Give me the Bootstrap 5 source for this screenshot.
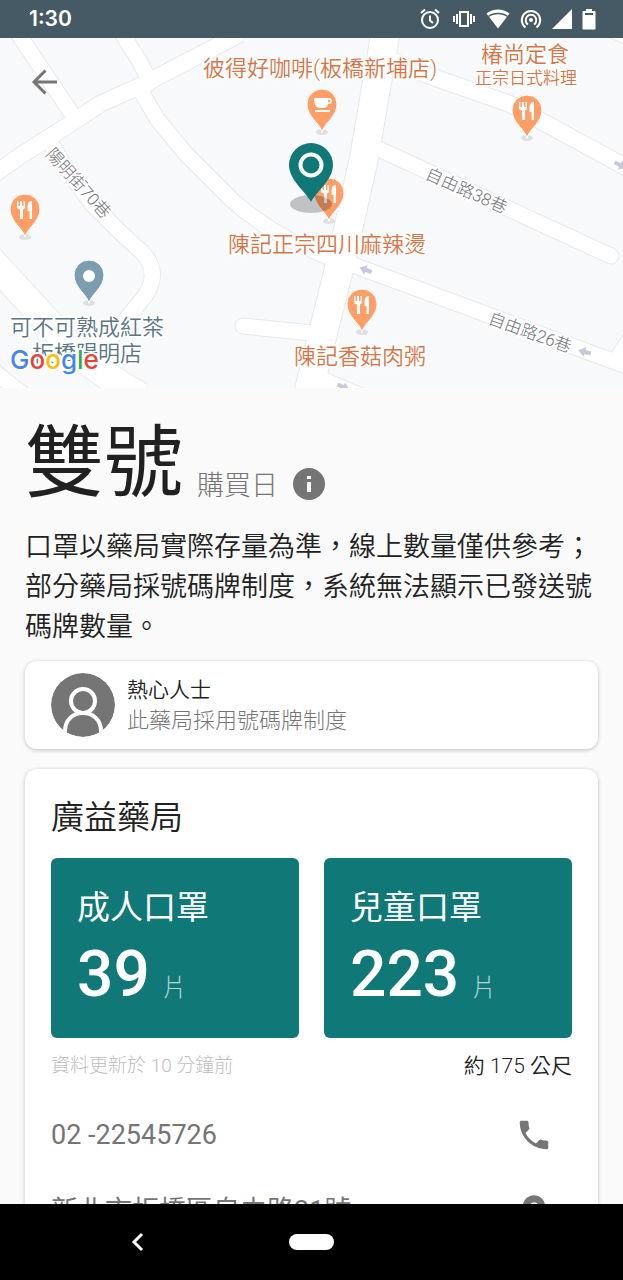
<!DOCTYPE html>
<html lang="zh-Hant">
<head>
<meta charset="utf-8">
<meta name="viewport" content="width=device-width, initial-scale=1">
<title>廣益藥局</title>
<link href="https://cdn.jsdelivr.net/npm/bootstrap@5.3.0/dist/css/bootstrap.min.css" rel="stylesheet">
<style>
  :root { --ink: #212121; --muted: #757575; --teal: #117878; }
  body { font-family: Roboto, "Noto Sans CJK TC", sans-serif; background: #fafafa; color: var(--ink); font-weight: 350; }
  .status-bar { height: 38px; background: #455a64; padding: 0 27px 0 29px; }
  .clock { font: 600 21px/38px Inter, sans-serif; }
  .status-icons { gap: 10px; }
  .screen { min-height: 0; overflow-y: auto; scrollbar-width: none; }
  .screen::-webkit-scrollbar { display: none; }
  .map-area { height: 350px; background: #f8f9fb; }
  .back-btn { top: 24px; left: 24px; line-height: 0; }
  .day-title { font-size: 79px; line-height: 80px; font-weight: 400; }
  .day-row { padding-top: 36px; gap: 14px; }
  .day-label { font-size: 27px; line-height: 36px; color: var(--muted); font-weight: 300; }
  .info-btn { line-height: 0; margin-bottom: 3px; }
  .content { padding: 0 25px; }
  .notice { font-size: 27px; line-height: 40px; margin: 23px 0 14px; }
  .panel { border: 0; border-radius: 12px; background: #fff; box-shadow: 0 1px 4px rgba(0,0,0,.24); }
  .tip { padding: 12px 26px; gap: 12px; margin-bottom: 20px; }
  .tip-name { font-size: 21px; line-height: 32px; }
  .tip-text { font-size: 22px; line-height: 30px; color: var(--muted); font-weight: 300; }
  .store { padding: 24px 26px; }
  .store-name { font-size: 33px; line-height: 50px; font-weight: 350; margin-bottom: 15px; }
  .tiles { gap: 25px; }
  .tile { height: 180px; background: var(--teal); border-radius: 6px; padding: 25px 26px; }
  .tile h3 { font-size: 33px; line-height: 50px; font-weight: 400; }
  .amount { font-size: 64px; line-height: 84px; font-weight: 500; }
  .unit { font-size: 24px; color: rgba(255,255,255,.7); font-weight: 300; margin-left: 13px; }
  .meta-row { line-height: 32px; padding: 12px 0 15px; }
  .updated { font-size: 19px; color: #bdbdbd; font-weight: 300; }
  .distance { font-size: 21px; }
  .distance span { font-weight: 300; }
  .contact { height: 76px; font-size: 27px; font-weight: 400; color: var(--muted); padding-right: 19px; }
  .nav-bar { height: 76px; }
  .nav-bar button { line-height: 0; }
  .home-pill { width: 45px; height: 16px; border-radius: 8px; background: #fff; display: block; }
  .map-area text { paint-order: stroke; stroke: #fff; stroke-width: 4px; stroke-linejoin: round; }
</style>
</head>
<body>
<div class="d-flex flex-column vh-100 overflow-hidden">

  <header class="status-bar d-flex flex-shrink-0 align-items-center justify-content-between text-white">
    <span class="clock">1:30</span>
    <div class="status-icons d-flex align-items-center">
      <svg width="24" height="24" viewBox="0 0 24 24" fill="none" stroke="#fff" stroke-width="2"><circle cx="12" cy="13" r="8"/><path d="M12 8.500v5l3 2.500M3 6l4-3.500M21 6l-4-3.500"/></svg>
      <svg width="24" height="24" viewBox="0 0 24 24" fill="none" stroke="#fff" stroke-width="2"><rect x="8" y="5" width="8" height="14"/><path d="M5 7v10M19 7v10M2 9v6M22 9v6"/></svg>
      <svg width="24" height="24" viewBox="0 0 24 24"><path fill="#fff" d="M12 21.500L.5 6.500C4 3.700 8 2.500 12 2.500s8 1.200 11.500 4z"/><path fill="none" stroke="#455a64" stroke-width="1.500" d="M2.500 9.500C5 7.500 8.500 6.500 12 6.500s7 1 9.500 3"/></svg>
      <svg class="ms-n1" width="22" height="24" viewBox="0 0 22 24" fill="none" stroke="#fff" stroke-width="2"><circle cx="11" cy="13" r="2" fill="#fff" stroke="none"/><path d="M8 17.500a5.300 5.300 0 1 1 6 0M5.500 20.500a9.200 9.200 0 1 1 11 0"/></svg>
      <svg width="20" height="24" viewBox="0 0 20 24"><path fill="#fff" d="M0 22L20 2v20z"/></svg>
      <svg width="14" height="24" viewBox="0 0 14 24"><path fill="#fff" d="M4 2h6v2h2.500c.6 0 1 .4 1 1v16.500c0 .6-.4 1-1 1h-11c-.6 0-1-.4-1-1V5c0-.6.4-1 1-1H4z"/><path fill="#455a64" d="M3 6h8v2H3z"/></svg>
    </div>
  </header>

  <main class="screen flex-grow-1">
    <section class="map-area position-relative" id="map" aria-label="地圖">
      <svg class="d-block" width="100%" height="100%" viewBox="0 38 623 350" preserveAspectRatio="xMidYMid slice">
        <defs>
          <g id="roads" fill="none">
            <path class="w15" d="M17 32L72 114"/>
            <path class="w16" d="M-10 177L20 156L70 124L100 104L140 86L240 34"/>
            <path class="w15" d="M121 32L140 62L150 82L140 90L158 120L185 153L232 200Q262 227 300 245L340 262"/>
            <path class="w15" d="M46 136L66 168L92 204L120 232L142 252Q161 272 145 296L105 345"/>
            <path class="w27" d="M-10 259L60 335Q85 365 140 396"/>
            <path class="w15" d="M-10 368L25 396"/>
            <path class="w28" d="M386 30L364 158L340 265L313 373L308 395"/>
            <path class="w16" d="M385 58L430 76L510 104L640 175"/>
            <path class="w15" d="M600 24L640 43"/>
            <path class="w15 cap" d="M370 145L611 256"/>
            <path class="w15" d="M345 262L645 373"/>
            <path class="w16" d="M640 324L614 364"/>
            <path class="w15 cap" d="M243 326L312 333"/>
            <path class="w16" d="M315 377L365 398"/>
          </g>
        </defs>
        <style>
          .w15 { stroke-width: calc(15px + var(--e)); } .w16 { stroke-width: calc(16px + var(--e)); }
          .w27 { stroke-width: calc(27px + var(--e)); } .w28 { stroke-width: calc(28px + var(--e)); }
          .cap { stroke-linecap: round; }
          .road-edge { --e: 2px; stroke: #e6e8eb; } .road-fill { --e: 0px; stroke: #fff; }
          .poi { fill: #d67548; font-size: 22px; font-weight: 350; text-anchor: middle; }
          .poi-sub { font-size: 17px; }
          .poi-shop { fill: #5b7583; }
          .street { fill: #6f7276; font-size: 17px; font-weight: 300; text-anchor: middle; }
        </style>
        <use href="#roads" class="road-edge"/>
        <use href="#roads" class="road-fill"/>

        <defs>
          <path id="arrow" fill="#c5c9de" d="M-7 0L0-5V-2H6V2H0V5z"/>
          <g id="pin">
            <ellipse cx="0" cy="43" rx="6" ry="3" fill="#000" opacity=".1"/>
            <path d="M0 43.500C-1 35-15 28-15 15A15 15 0 0 1 15 15C15 28 1 35 0 43.500z" stroke="#fff" stroke-width="1"/>
          </g>
          <g id="food" fill="#fff"><path d="M-9 7h1.500v5h1.500V7h2v5h1.500V7H-1v6q0 2-2 2.500V25H-6v-9.500q-3-.5-3-2.500z"/><path d="M6 7V25H3.500V17H1.500V12Q2 7 6 7z"/></g>
        </defs>
        <use href="#arrow" transform="translate(366 270) rotate(20)"/>
        <use href="#arrow" transform="translate(585 352) rotate(15)"/>
        <use href="#arrow" transform="translate(620 165) rotate(205)"/>
        <use href="#arrow" transform="translate(343 387) rotate(205)"/>

        <use href="#pin" x="322" y="89" fill="#ff9e67"/>
        <path fill="#fff" fill-rule="evenodd" d="M314 98h14.500q3.500 0 3.500 3t-4 3q-1 4-4 4h-5q-5-1-5-10zM328 99.500v3q2 0 2-1.500t-2-1.500zM315 110h15v2h-15z"/>
        <use href="#pin" x="527" y="95" fill="#ff9e67"/><use href="#food" x="528" y="95"/>
        <use href="#pin" x="25" y="194" fill="#ff9e67"/><use href="#food" x="26" y="194"/>
        <use href="#pin" x="362" y="289" fill="#ff9e67"/><use href="#food" x="363" y="289"/>
        <use href="#pin" x="329" y="178" fill="#ff9e67"/><use href="#food" x="330" y="178"/>
        <use href="#pin" x="89" y="260" fill="#7b9dad"/><circle cx="89" cy="276" r="6" fill="#fff"/>

        <ellipse cx="311" cy="204" rx="21" ry="9" fill="#000" opacity=".22"/>
        <path fill="#117878" d="M311 202C306 192 289 180 289 165A22 22 0 0 1 333 165C333 180 316 192 311 202z"/>
        <circle cx="311" cy="165" r="10.500" fill="none" stroke="#fff" stroke-width="4"/>

        <text class="poi" x="320" y="76">彼得好咖啡(板橋新埔店)</text>
        <text class="poi" x="525" y="62">椿尚定食</text>
        <text class="poi poi-sub" x="526" y="84">正宗日式料理</text>
        <text class="poi" x="327" y="252">陳記正宗四川麻辣燙</text>
        <text class="poi" x="360" y="364">陳記香菇肉粥</text>
        <text class="poi poi-shop" x="87" y="335">可不可熟成紅茶</text>
        <text class="poi poi-shop" x="87" y="361">板橋陽明店</text>
        <text class="street" transform="translate(74 187) rotate(48)">陽明街70巷</text>
        <text class="street" transform="translate(464 196) rotate(24)">自由路38巷</text>
        <text class="street" transform="translate(528 338) rotate(20)">自由路26巷</text>
        <text x="10" y="369" font-family="Inter, sans-serif" font-size="26" font-weight="500"><tspan fill="#4285f4">G</tspan><tspan fill="#ea4335">o</tspan><tspan fill="#fbbc05">o</tspan><tspan fill="#4285f4">g</tspan><tspan fill="#34a853">l</tspan><tspan fill="#ea4335">e</tspan></text>
      </svg>
      <button class="back-btn btn p-0 border-0 position-absolute" type="button" aria-label="返回">
        <svg width="40" height="40" viewBox="0 0 40 40" fill="none" stroke="#757575" stroke-width="3"><path d="M33 20H10M21.500 8.500L10 20l11.500 11.500"/></svg>
      </button>
    </section>

    <div class="content">
      <div class="day-row d-flex align-items-end">
        <h1 class="day-title m-0">雙號</h1>
        <span class="day-label">購買日</span>
        <button class="info-btn btn p-0 border-0" type="button" aria-label="說明">
          <svg width="34" height="34" viewBox="0 0 34 34"><circle cx="17" cy="17" r="16" fill="#757575"/><path fill="#fafafa" d="M15 9h4v3h-4zM15 15h4v10h-4z"/></svg>
        </button>
      </div>

      <p class="notice">口罩以藥局實際存量為準，線上數量僅供參考；部分藥局採號碼牌制度，系統無法顯示已發送號碼牌數量。</p>

      <div class="panel tip d-flex align-items-center">
        <svg class="flex-shrink-0" width="64" height="64" viewBox="0 0 64 64"><defs><clipPath id="face"><circle cx="32" cy="32" r="32"/></clipPath></defs><g clip-path="url(#face)"><circle cx="32" cy="32" r="32" fill="#757575"/><g fill="none" stroke="#fff" stroke-width="4"><circle cx="32" cy="28" r="12"/><path d="M14 66V58C14 47 22 40 32 40s18 7 18 18v8"/></g></g></svg>
        <div>
          <div class="tip-name">熱心人士</div>
          <div class="tip-text">此藥局採用號碼牌制度</div>
        </div>
      </div>

      <section class="panel store">
        <h2 class="store-name">廣益藥局</h2>
        <div class="tiles d-flex">
          <div class="tile flex-fill w-50 text-white">
            <h3 class="m-0">成人口罩</h3>
            <div class="amount">39<span class="unit">片</span></div>
          </div>
          <div class="tile flex-fill w-50 text-white">
            <h3 class="m-0">兒童口罩</h3>
            <div class="amount">223<span class="unit">片</span></div>
          </div>
        </div>
        <div class="meta-row d-flex justify-content-between">
          <span class="updated">資料更新於 10 分鐘前</span>
          <div class="distance">約 <span>175</span> 公尺</div>
        </div>
        <a class="contact d-flex align-items-center justify-content-between text-decoration-none" href="tel:0222545726">
          <span>02 -22545726</span>
          <svg width="38" height="38" viewBox="0 0 24 24" fill="#757575"><path d="M6.620 10.790c1.440 2.830 3.760 5.140 6.590 6.590l2.200-2.200c.27-.27.67-.36 1.020-.24 1.120.37 2.330.57 3.570.57.550 0 1 .45 1 1V20c0 .55-.45 1-1 1-9.390 0-17-7.610-17-17 0-.55.45-1 1-1h3.500c.55 0 1 .45 1 1 0 1.250.2 2.450.57 3.570.11.35.03.74-.25 1.020z"/></svg>
        </a>
        <a class="contact d-flex align-items-center justify-content-between text-decoration-none" href="#map">
          <span>新北市板橋區自由路21號</span>
          <svg width="38" height="38" viewBox="0 0 24 24" fill="#757575"><path d="M12 2C8.130 2 5 5.130 5 9c0 5.250 7 13 7 13s7-7.750 7-13c0-3.870-3.130-7-7-7zm0 9.500a2.500 2.500 0 1 1 0-5 2.500 2.500 0 0 1 0 5z"/></svg>
        </a>
      </section>
    </div>
  </main>

  <nav class="nav-bar bg-black d-flex flex-shrink-0 align-items-center" aria-label="系統導覽">
    <div class="col d-flex justify-content-center">
      <button class="btn p-0 border-0 me-3" type="button" aria-label="上一頁"><svg width="16" height="20" viewBox="0 0 16 20" fill="none" stroke="#fff" stroke-width="3"><path d="M13 2L5 10l8 8"/></svg></button>
    </div>
    <button class="btn p-0 border-0" type="button" aria-label="主畫面"><span class="home-pill"></span></button>
    <div class="col"></div>
  </nav>
</div>
<script src="https://cdn.jsdelivr.net/npm/bootstrap@5.3.0/dist/js/bootstrap.bundle.min.js"></script>
</body>
</html>
